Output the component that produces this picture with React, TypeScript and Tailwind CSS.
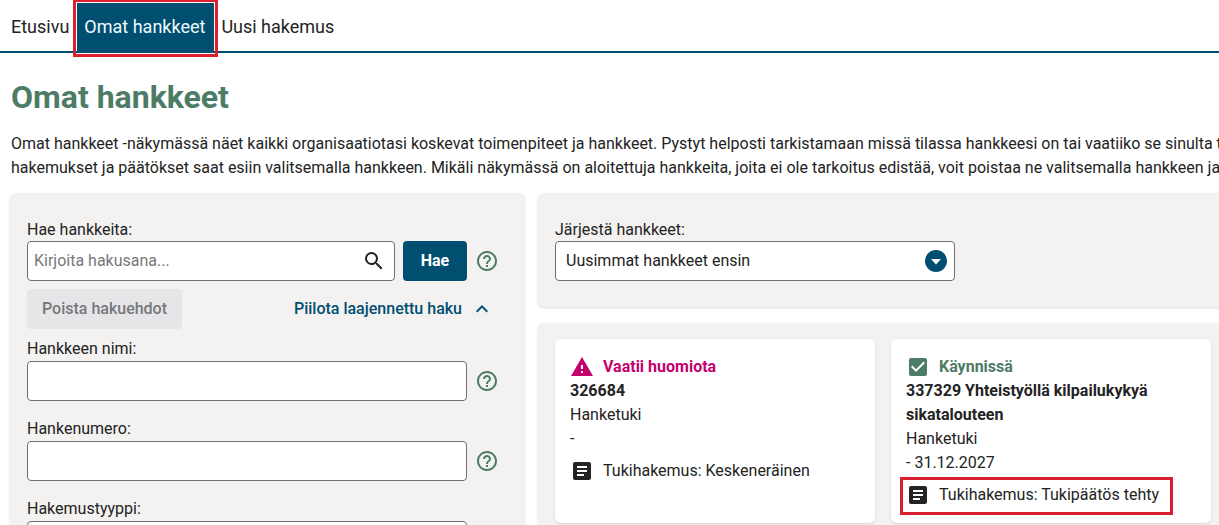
import { MdArticle, MdCheckBox, MdHelpOutline, MdKeyboardArrowUp, MdSearch, MdWarning } from 'react-icons/md';

const navItems = [
  { label: 'Etusivu', active: false, pad: 'px-2' },
  { label: 'Omat hankkeet', active: true, pad: 'pr-[9px] pl-[7px]' },
  { label: 'Uusi hakemus', active: false, pad: 'pr-[9px] pl-[7px]' },
];

function Help() {
  return <MdHelpOutline className="size-6 shrink-0 text-[#4d7c66]" />;
}

function Field({ label }: { label: string }) {
  return (
    <div className="mb-4">
      <label className="block h-6 leading-6">{label}</label>
      <div className="flex items-center gap-2">
        <input className="h-10 w-[440px] rounded border border-[#6f6f73] bg-white" />
        <Help />
      </div>
    </div>
  );
}

export default function App() {
  return (
    <div className="h-[525px] overflow-hidden bg-white font-['Roboto',sans-serif] text-base text-[#232323]">
      {/* Navigaatio */}
      <nav className="flex h-[53px] items-end border-b-2 border-[#004f71] pl-[3px] text-lg">
        {navItems.map((item) => (
          <div key={item.label} className="relative">
            <a className={`flex h-12 items-center ${item.pad} ${item.active ? 'bg-[#004f71] text-[#f1f8fb]' : ''}`}>
              {item.label}
            </a>
            {item.active && (
              <span className="absolute -inset-x-1 -top-[4px] -bottom-[6px] border-[3px] border-[#d9202c]" />
            )}
          </div>
        ))}
      </nav>

      <main className="w-[1250px] pl-[10px]">
        <h1 className="mt-6 ml-px text-[32px] leading-10 font-bold text-[#4d7c66]">Omat hankkeet</h1>
        <div className="mt-[15px] ml-px text-base leading-6 whitespace-nowrap">
          <p>
            Omat hankkeet -näkymässä näet kaikki organisaatiotasi koskevat toimenpiteet ja hankkeet. Pystyt helposti
            tarkistamaan missä tilassa hankkeesi on tai vaatiiko se sinulta toimenpiteitä.
          </p>
          <p>
            hakemukset ja päätökset saat esiin valitsemalla hankkeen. Mikäli näkymässä on aloitettuja hankkeita, joita ei
            ole tarkoitus edistää, voit poistaa ne valitsemalla hankkeen ja
          </p>
        </div>

        <div className="mt-[13px] flex items-start gap-[13px]">
          {/* Hakupaneeli */}
          <section className="h-[400px] w-[515px] shrink-0 rounded-md bg-[#f3f2f1] px-[17px] pt-[25px] shadow-sm">
            <label className="block h-[23px] leading-6">Hae hankkeita:</label>
            <div className="flex items-center gap-2">
              <div className="flex h-10 w-[368px] items-center justify-between rounded border border-[#6f6f73] bg-white pr-2 pl-[6px]">
                <span className="text-[#77777b]">Kirjoita hakusana...</span>
                <MdSearch className="size-6 text-[#232323]" />
              </div>
              <button className="h-10 w-16 rounded bg-[#004f71] font-bold text-white">Hae</button>
              <Help />
            </div>
            <div className="mt-2 flex items-center justify-between pr-[14px]">
              <button className="h-10 w-[155px] rounded bg-[#e6e6e9] font-medium text-[#77777b]">Poista hakuehdot</button>
              <span className="flex items-center gap-2 font-medium text-[#004f71]">
                Piilota laajennettu haku
                <MdKeyboardArrowUp className="size-6" />
              </span>
            </div>
            <div className="mt-2">
              <Field label="Hankkeen nimi:" />
              <Field label="Hankenumero:" />
              <Field label="Hakemustyyppi:" />
            </div>
          </section>

          <div className="flex w-[700px] shrink-0 flex-col gap-4">
            {/* Järjestys */}
            <section className="h-[114px] rounded-md bg-[#f3f2f1] px-[17px] pt-[25px] shadow-sm">
              <label className="block h-[23px] leading-6">Järjestä hankkeet:</label>
              <div className="flex h-10 w-[400px] items-center justify-between rounded border border-[#6f6f73] bg-white pr-[7px] pl-[10px]">
                <span>Uusimmat hankkeet ensin</span>
                <svg viewBox="0 0 22 22" className="size-[22px]">
                  <circle cx="11" cy="11" r="11" fill="#004f71" />
                  <path d="M6 9h10l-5 5.5z" fill="#fff" />
                </svg>
              </div>
            </section>

            {/* Hankekortit */}
            <section className="flex h-[300px] gap-4 rounded-md bg-[#f3f2f1] py-4 pl-[17px] shadow-sm">
              <article className="h-[184px] w-[320px] rounded-md bg-white pt-4 pr-4 pl-[15px] shadow-sm">
                <div className="flex h-6 items-center gap-[9px] font-bold text-[#c4006f]">
                  <MdWarning className="size-6" />
                  <span>Vaatii huomiota</span>
                </div>
                <p className="leading-6 font-bold">326684</p>
                <p className="leading-6">Hanketuki</p>
                <p className="leading-6">-</p>
                <div className="mt-2 flex h-6 items-center gap-[9px]">
                  <MdArticle className="size-6" />
                  <span>Tukihakemus: Keskeneräinen</span>
                </div>
              </article>

              <article className="h-[184px] w-[320px] rounded-md bg-white pt-4 pr-4 pl-[15px] shadow-sm">
                <div className="flex h-6 items-center gap-[9px] font-bold text-[#4d7c66]">
                  <MdCheckBox className="size-6" />
                  <span>Käynnissä</span>
                </div>
                <p className="leading-6 font-bold">337329 Yhteistyöllä kilpailukykyä sikatalouteen</p>
                <p className="leading-6">Hanketuki</p>
                <p className="leading-6">- 31.12.2027</p>
                <div className="relative mt-2 flex h-6 items-center gap-[9px]">
                  <MdArticle className="size-6" />
                  <span>Tukihakemus: Tukipäätös tehty</span>
                  <span className="absolute -top-[6px] -left-[6px] h-[38px] w-[273px] border-[3px] border-[#d9202c]" />
                </div>
              </article>
            </section>
          </div>
        </div>
      </main>
    </div>
  );
}
